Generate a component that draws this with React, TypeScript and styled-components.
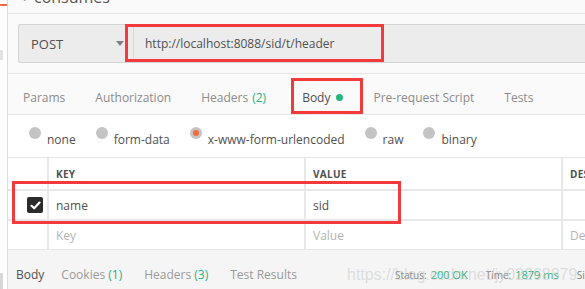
import { FC } from "react";
import styled, { createGlobalStyle } from "styled-components";

const GlobalStyle = createGlobalStyle`
    html, body {
        margin: 0;
        padding: 0;
        background: #ffffff;
        font-family: "Open Sans", "Noto Sans", sans-serif;
        overflow: hidden;
    }
`;

const tabs = [
    { label: "Params" },
    { label: "Authorization" },
    { label: "Headers", count: "(2)" },
    { label: "Body", dot: true, active: true },
    { label: "Pre-request Script" },
    { label: "Tests" },
];

const radios = [
    { label: "none" },
    { label: "form-data" },
    { label: "x-www-form-urlencoded", checked: true },
    { label: "raw" },
    { label: "binary" },
];

const App: FC = () => {
    return (
        <>
            <GlobalStyle />
            <SPage>
                <SSidebar>
                    <SOrangeBar />
                    <SSideTab />
                    <SSideFoot />
                </SSidebar>

                <SMain>
                    <SHeader>
                        <SCaret>▸</SCaret>
                        <span>consumes</span>
                    </SHeader>

                    <SRequestBar>
                        <SMethod>
                            <span>POST</span>
                            <SArrow />
                        </SMethod>
                        <SUrl>http://localhost:8088/sid/t/header</SUrl>
                        <SMark style={{ left: 117, top: 10, width: 259, height: 38 }} />
                    </SRequestBar>

                    <STabs>
                        {tabs.map((t) => (
                            <STab key={t.label} $active={t.active}>
                                {t.label}
                                {t.count && <SCount>{t.count}</SCount>}
                                {t.dot && <SDot />}
                            </STab>
                        ))}
                        <SMark style={{ left: 283, top: 4, width: 72, height: 36 }} />
                    </STabs>

                    <SRadios>
                        {radios.map((r) => (
                            <SRadio key={r.label}>
                                <SCircle $checked={r.checked} />
                                <span>{r.label}</span>
                            </SRadio>
                        ))}
                    </SRadios>

                    <STable>
                        <SRow $head>
                            <SCheckCell />
                            <SCell $w={257}>KEY</SCell>
                            <SCell $w={257}>VALUE</SCell>
                            <SCell $w={40}>DESCRIPTION</SCell>
                        </SRow>
                        <SRow>
                            <SCheckCell>
                                <SCheckbox>
                                    <svg width="11" height="9" viewBox="0 0 11 9">
                                        <path d="M1.5 4.8 L4.2 7.3 L9.5 1.6" fill="none" stroke="#fff" strokeWidth="2.2" strokeLinecap="round" strokeLinejoin="round" />
                                    </svg>
                                </SCheckbox>
                            </SCheckCell>
                            <SCell $w={257}>name</SCell>
                            <SCell $w={257}>sid</SCell>
                            <SCell $w={40} />
                        </SRow>
                        <SRow $last>
                            <SCheckCell />
                            <SCell $w={257} $placeholder>Key</SCell>
                            <SCell $w={257} $placeholder>Value</SCell>
                            <SCell $w={40} $placeholder>Description</SCell>
                        </SRow>
                        <SMark style={{ left: 4, top: 23, width: 389, height: 43 }} />
                    </STable>

                    <SResponse>
                        <SRespTab $active>Body</SRespTab>
                        <SRespTab>Cookies <SCount>(1)</SCount></SRespTab>
                        <SRespTab>Headers <SCount>(3)</SCount></SRespTab>
                        <SRespTab>Test Results</SRespTab>
                        <SStatus>
                            <span>Status:</span>
                            <SGreen>200 OK</SGreen>
                            <span>Time:</span>
                            <SGreen>1879 ms</SGreen>
                            <span>Size:</span>
                        </SStatus>
                        <SWatermark>https://blog.csdn.net/jy02268879</SWatermark>
                    </SResponse>
                </SMain>
            </SPage>
        </>
    );
};

export default App;

const SPage = styled.div`
    display: flex;
    width: 585px;
    height: 289px;
    overflow: hidden;
`;

const SSidebar = styled.div`
    position: relative;
    width: 7px;
    flex: none;
    background: #ffffff;
    border-right: 1px solid #dcdcdc;
    display: flex;
    flex-direction: column;
`;

const SOrangeBar = styled.div`
    margin-top: 4px;
    height: 2px;
    background: #f26b3a;
`;

const SSideTab = styled.div`
    margin-top: 44px;
    width: 3px;
    height: 10px;
    background: #e2e2e2;
`;

const SSideFoot = styled.div`
    margin-top: auto;
    width: 3px;
    height: 16px;
    background: #d8d8d8;
`;

const SMain = styled.div`
    flex: 1;
    min-width: 0;
    display: flex;
    flex-direction: column;
    background: #fafafa;
`;

const SHeader = styled.div`
    height: 13px;
    flex: none;
    border-bottom: 1px solid #e6e6e6;
    padding-left: 16px;
    display: flex;
    align-items: flex-end;
    gap: 5px;
    overflow: hidden;
    color: #555555;
    font-size: 16px;
    line-height: 16px;

    span {
        margin-bottom: 8px;
    }
`;

const SCaret = styled.span`
    font-size: 10px;
    color: #777777;
`;

const SRequestBar = styled.div`
    position: relative;
    flex: none;
    display: flex;
    padding: 10px 0 10px 10px;
    border-bottom: 1px solid #e6e6e6;
`;

const SMethod = styled.div`
    width: 115px;
    height: 39px;
    box-sizing: border-box;
    background: #ececec;
    border: 1px solid #d4d4d4;
    border-right: none;
    border-radius: 3px 0 0 3px;
    display: flex;
    align-items: center;
    justify-content: space-between;
    padding: 0 9px 0 12px;
    font-size: 13px;
    color: #505050;
`;

const SArrow = styled.div`
    width: 0;
    height: 0;
    border-left: 4px solid transparent;
    border-right: 4px solid transparent;
    border-top: 5px solid #808080;
`;

const SUrl = styled.div`
    flex: 1;
    height: 39px;
    box-sizing: border-box;
    background: #ececec;
    border: 1px solid #d4d4d4;
    border-right: none;
    border-left: 1px solid #d8d8d8;
    display: flex;
    align-items: center;
    padding-left: 11px;
    font-size: 12px;
    color: #505050;
`;

const SMark = styled.div`
    position: absolute;
    box-sizing: border-box;
    border: 3px solid #f23a3c;
    pointer-events: none;
`;

const STabs = styled.div`
    position: relative;
    flex: none;
    height: 41px;
    display: flex;
    align-items: center;
    gap: 30px;
    padding: 6px 0 0 15px;
    box-sizing: border-box;
    border-bottom: 1px solid #e6e6e6;
`;

const STab = styled.div<{ $active?: boolean }>`
    font-size: 12px;
    color: ${(p) => (p.$active ? "#505050" : "#8c8c8c")};
    display: flex;
    align-items: center;
    gap: 4px;
    white-space: nowrap;
    margin-left: ${(p) => (p.$active ? "6px" : "0")};
`;

const SCount = styled.span`
    color: #26b47f;
`;

const SDot = styled.span`
    width: 7px;
    height: 7px;
    border-radius: 50%;
    background: #26b47f;
    margin-left: 2px;
`;

const SRadios = styled.div`
    flex: none;
    height: 43px;
    box-sizing: border-box;
    display: flex;
    align-items: center;
    gap: 20px;
    padding: 2px 0 0 21px;
    background: #ffffff;
    border-bottom: 1px solid #e6e6e6;
`;

const SRadio = styled.div`
    display: flex;
    align-items: flex-start;
    gap: 6px;
    font-size: 12px;
    color: #505050;

    span {
        margin-top: 4px;
    }
`;

const SCircle = styled.div<{ $checked?: boolean }>`
    width: 12px;
    height: 12px;
    border-radius: 50%;
    background: #c4c4c4;
    display: flex;
    align-items: center;
    justify-content: center;

    &::after {
        content: "";
        width: 6px;
        height: 6px;
        border-radius: 50%;
        background: #f26b3a;
        display: ${(p) => (p.$checked ? "block" : "none")};
    }
`;

const STable = styled.div`
    position: relative;
    flex: none;
    background: #ffffff;
    display: flex;
    flex-direction: column;
`;

const SRow = styled.div<{ $head?: boolean; $last?: boolean }>`
    display: flex;
    height: ${(p) => (p.$head ? 31 : 28)}px;
    border-bottom: ${(p) => (p.$last ? "none" : "2px solid #e8e8e8")};
    font-size: ${(p) => (p.$head ? "10px" : "12px")};
    font-weight: ${(p) => (p.$head ? 700 : 400)};
    color: #505050;
    letter-spacing: ${(p) => (p.$head ? "0.3px" : "0")};
`;

const SCheckCell = styled.div`
    width: 41px;
    flex: none;
    border-right: 2px solid #e8e8e8;
    display: flex;
    align-items: center;
    justify-content: flex-end;
    padding-right: 4px;
    box-sizing: border-box;
`;

const SCell = styled.div<{ $w: number; $placeholder?: boolean }>`
    width: ${(p) => p.$w}px;
    flex: none;
    box-sizing: border-box;
    border-right: 2px solid #e8e8e8;
    padding-left: 7px;
    display: flex;
    align-items: center;
    white-space: nowrap;
    overflow: hidden;
    color: ${(p) => (p.$placeholder ? "#b5b5b5" : "inherit")};

    &:last-child {
        border-right: none;
        flex: 1;
    }
`;

const SCheckbox = styled.div`
    width: 16px;
    height: 16px;
    border-radius: 2px;
    background: #2b2b2b;
    display: flex;
    align-items: center;
    justify-content: center;
`;

const SResponse = styled.div`
    position: relative;
    flex: 1;
    background: #f5f5f5;
    border-top: 1px solid #e6e6e6;
    display: flex;
    align-items: center;
    gap: 22px;
    padding: 10px 0 0 8px;
    font-size: 12px;
    white-space: nowrap;
    overflow: hidden;
`;

const SRespTab = styled.div<{ $active?: boolean }>`
    color: ${(p) => (p.$active ? "#505050" : "#9a9a9a")};

    &:first-child {
        margin-right: -5px;
    }
`;

const SStatus = styled.div`
    margin-left: 76px;
    display: flex;
    align-items: baseline;
    gap: 4px;
    color: #808080;
    font-size: 10px;

    span:nth-child(2),
    span:nth-child(4) {
        margin-right: 14px;
    }
`;

const SGreen = styled.span`
    color: #26b47f;
    font-size: 11px;
`;

const SWatermark = styled.div`
    position: absolute;
    left: 339px;
    top: 16px;
    font-family: "Liberation Sans", Arial, sans-serif;
    font-size: 16px;
    color: rgba(190, 190, 190, 0.45);
    pointer-events: none;
`;
